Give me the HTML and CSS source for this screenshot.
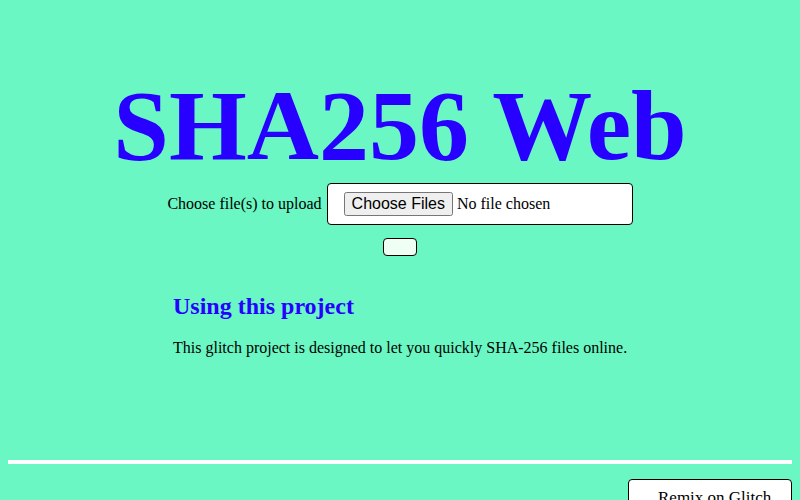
FILE: index.html
```html
<!DOCTYPE html>
<html lang="en">
<head>
  <meta charset="UTF-8">
  <meta name="viewport" content="width=device-width, initial-scale=1.0">
  <title>SHA256 Web</title>
  <link rel="stylesheet" href="styles.css">
</head>
<body>
  <header>
    <h1 class="title">SHA256 Web</h1>
  </header>
  <main>
    <form class="upload-form">
      <div class="upload-row">
        <label for="files">Choose file(s) to upload</label>
        <div class="file-box">
          <input type="file" id="files" name="files" multiple>
        </div>
      </div>
      <button type="submit" class="hash-button"></button>
    </form>
    <section class="about">
      <h2>Using this project</h2>
      <p>This glitch project is designed to let you quickly SHA-256 files online.</p>
    </section>
  </main>
  <footer>
    <hr class="divider">
    <div class="remix">
      <a class="remix-button" href="#">Remix on Glitch</a>
    </div>
  </footer>
</body>
</html>
```

FILE: styles.css
```css
body {
  margin: 8px;
  background-color: #6af7c3;
  font-family: "Liberation Serif", "Times New Roman", serif;
  font-size: 16px;
  color: #000;
}
header {
  padding-top: 60px;
  text-align: center;
}
.title {
  margin: 0;
  font-size: 100px;
  line-height: 115px;
  color: #2800ff;
}
.upload-form {
  display: flex;
  flex-direction: column;
  align-items: center;
}
.upload-row {
  display: flex;
  align-items: center;
  gap: 5px;
}
.file-box {
  width: 288px;
  height: 40px;
  padding: 0 0 0 16px;
  display: flex;
  align-items: center;
  background: #fff;
  border: 1px solid #000;
  border-radius: 4px;
}
.file-box input {
  font-family: "Liberation Serif", serif;
  font-size: 16px;
}
.hash-button {
  margin-top: 13px;
  width: 34px;
  height: 18px;
  background: #f0fff4;
  border: 1px solid #000;
  border-radius: 4px;
  padding: 0;
}
.about {
  width: 454px;
  margin: 37px auto 0;
}
.about h2 {
  margin: 0;
  font-size: 24px;
  color: #2800ff;
}
.about p {
  margin: 19px 0 0;
  white-space: nowrap;
}
footer {
  margin-top: 103px;
}
.divider {
  margin: 0;
  border: none;
  height: 4px;
  background: #fff;
}
.remix {
  display: flex;
  justify-content: flex-end;
  margin-top: 15px;
}
.remix-button {
  width: 164px;
  height: 44px;
  box-sizing: border-box;
  padding: 8px 0 0 29px;
  background: #fff;
  border: 1px solid #000;
  border-radius: 4px;
  color: #000;
  text-decoration: none;
  font-size: 17px;
}
```
